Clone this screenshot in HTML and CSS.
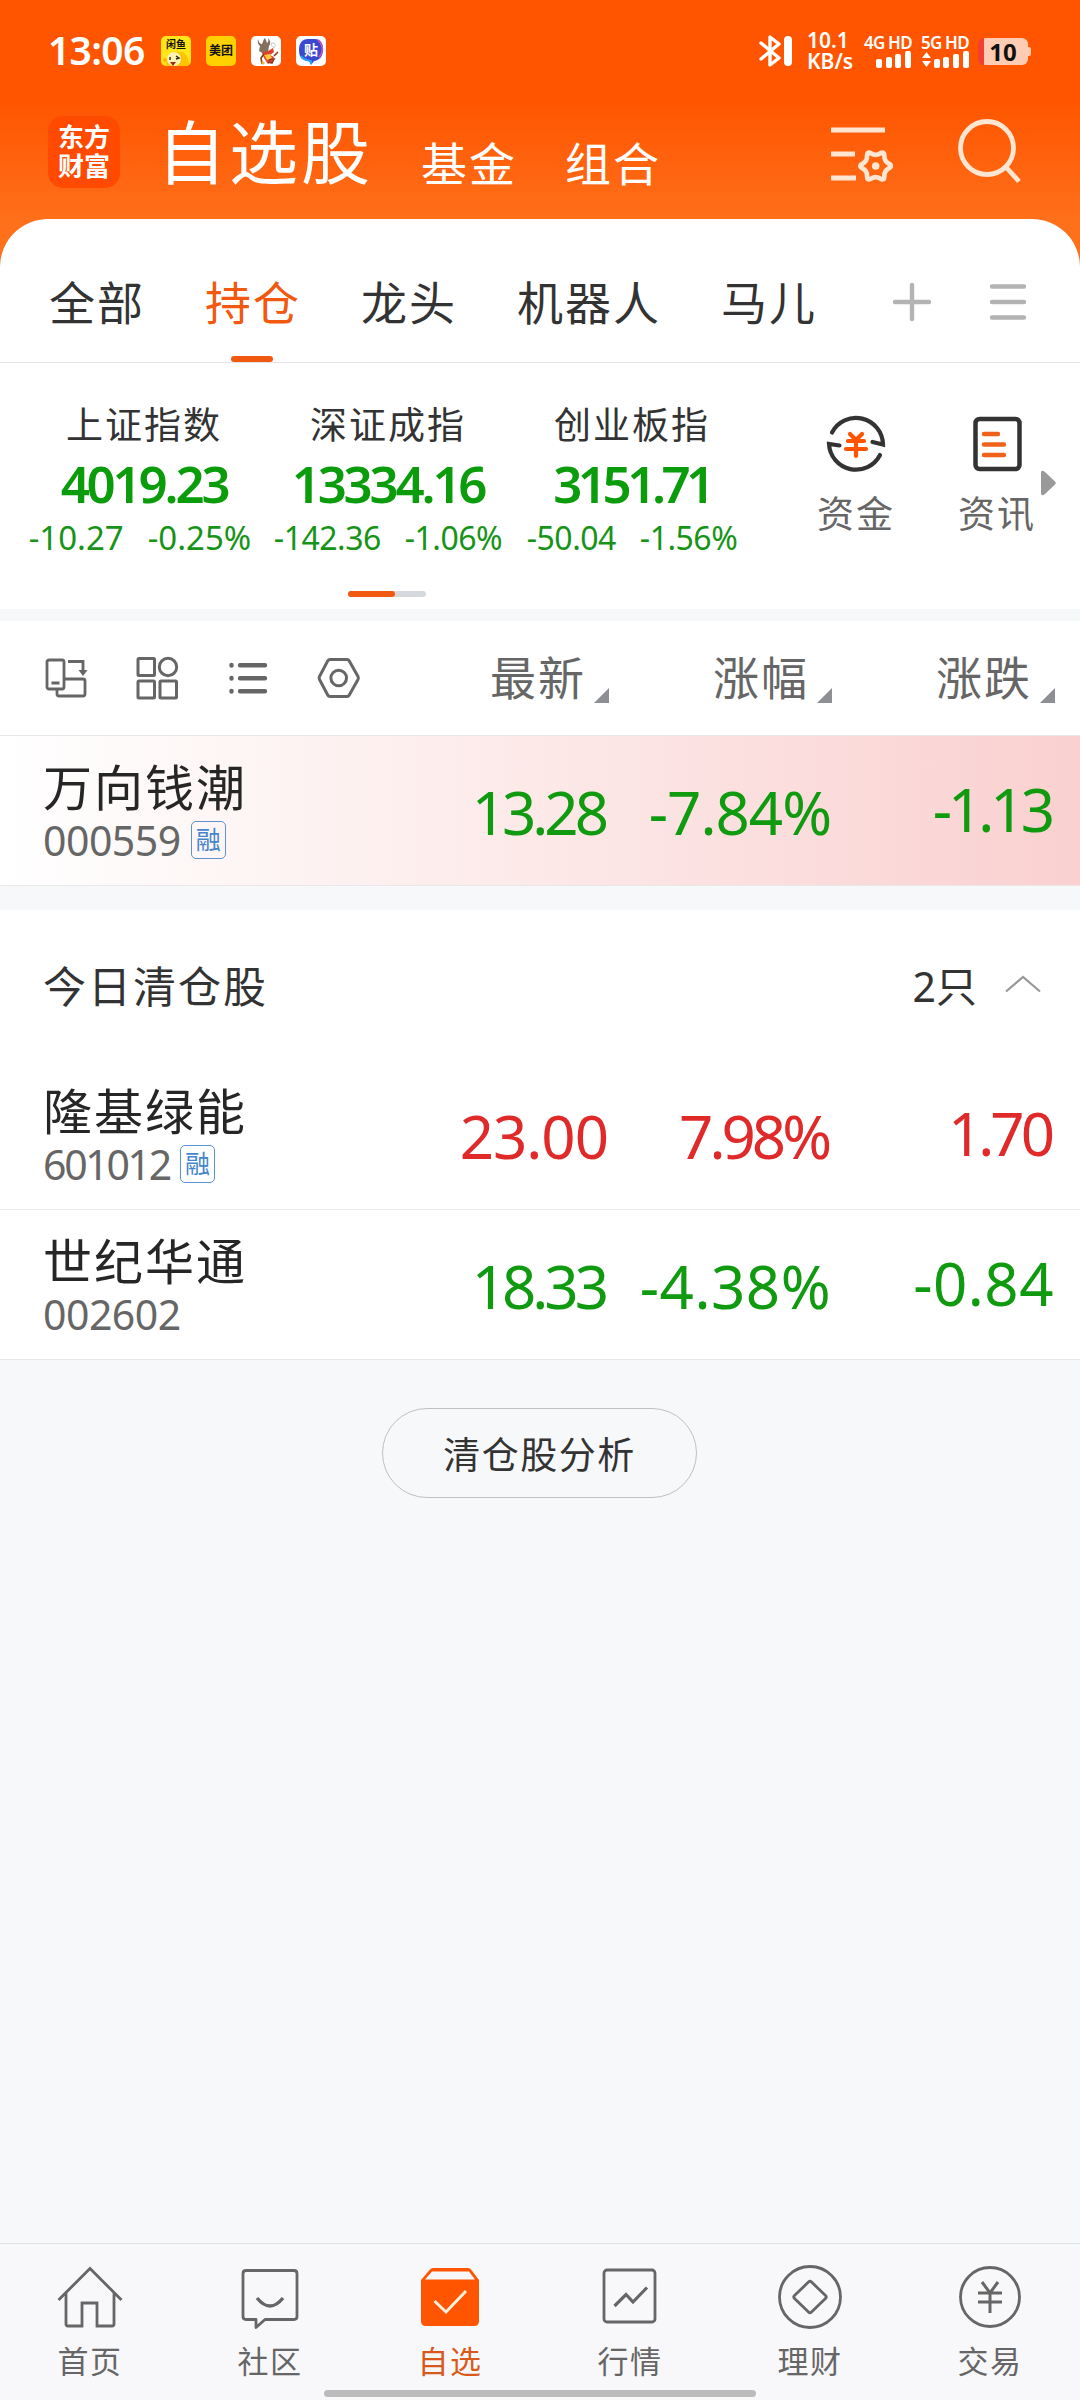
FILE: index.html
```
<!DOCTYPE html>
<html lang="zh-CN">
<head>
    <meta charset="UTF-8">
    <title>自选股 - 东方财富</title>
    <link rel="stylesheet" href="styles.css">
</head>
<body>

<header class="top">
    <div class="status">
        <span class="time">13:06</span>
        <div class="apps">
            <div class="app xianyu">
                <span>闲鱼</span>
                <svg width="30" height="15" viewBox="0 0 30 15"><path d="M5 15C5 5 11 0 18 1c7-1 10 6 10 14z" fill="#ffc400"/><circle cx="13" cy="8" r="7" fill="#fff3b0"/><path d="M9 6v3M15 5l3 2-3 1" stroke="#222" stroke-width="1.400" fill="none"/><path d="M9 11h6l-3 4z" fill="#a3281c"/><circle cx="4" cy="9" r="2" fill="#ffb400"/></svg>
            </div>
            <div class="app meituan"><span>美团</span></div>
            <div class="app">
                <svg width="30" height="30" viewBox="0 0 30 30"><path d="M7 3q1 5 4 5l2-5q1-2 2 1l1 3q2-1 1-5 4 4 1 8l-1 6-4 2-5-3 1-5Q6 8 7 3z" fill="#84705f"/><path d="M11 17l6-2 5-3 1 4-4 3 4 2-2 5-4 2-4-6z" fill="#e2402c"/><path d="M13 19l6-1 2 4-5 2z" fill="#ffc93c"/><path d="M13 18l-3 4 1 6M18 24l5-1-2 4-4-1M23 20l4-4" fill="none" stroke="#8c3d1c" stroke-width="1.600"/><circle cx="12" cy="27" r="1.600" fill="#f5b730"/><path d="M20 9q0-3 3-2 3 2 0 5z" fill="#fff" stroke="#bbb" stroke-width=".8"/></svg>
            </div>
            <div class="app tieba">
                <svg width="30" height="30" viewBox="0 0 30 30"><path d="M12 3h7c5 0 8 4 8 10s-2 11-9 12l-3 4-2-4C6 25 3 21 3 14S6 3 12 3z" fill="#3a49d0"/><path d="M22 4c5 4 6 12 1 17" fill="none" stroke="#c84fc0" stroke-width="1.800"/><path d="M5 20c2 4 6 4 10 5v3" fill="none" stroke="#27a5f5" stroke-width="1.800"/></svg>
                <span>贴</span>
            </div>
        </div>
        <div class="signals">
            <svg class="bt" width="34" height="32" viewBox="0 0 34 32"><path d="M2 8l18 15-9 7V2l9 7L2 24" fill="none" stroke="#fff" stroke-width="3.400" stroke-linejoin="round" stroke-linecap="round"/><rect x="25" y="1" width="8" height="30" rx="4" fill="#fff"/></svg>
            <div class="speed"><b>10.1</b><b>KB/s</b></div>
            <div class="sim">
                <b>4G HD</b>
                <svg width="48" height="17" viewBox="0 0 48 17" fill="#fff"><rect x="12" y="8" width="6" height="9" rx="2"/><rect x="22" y="6" width="6" height="11" rx="2"/><rect x="31" y="3" width="6" height="14" rx="2"/><rect x="41" y="0" width="6" height="17" rx="2"/></svg>
            </div>
            <div class="sim">
                <b>5G HD</b>
                <svg width="48" height="17" viewBox="0 0 48 17" fill="#fff"><path d="M1 7l4.500-6 4.500 6zM1 10l4.500 6 4.500-6z"/><rect x="13" y="8" width="6" height="9" rx="2"/><rect x="22" y="6" width="6" height="11" rx="2"/><rect x="32" y="3" width="6" height="14" rx="2"/><rect x="42" y="0" width="6" height="17" rx="2"/></svg>
            </div>
            <div class="battery"><b>10</b></div>
        </div>
    </div>
    <div class="title-bar">
        <div class="logo"><span>东方</span><span>财富</span></div>
        <h1>自选股</h1>
        <a class="sub">基金</a>
        <a class="sub">组合</a>
        <svg class="manage" width="64" height="64" viewBox="0 0 64 64" fill="none" stroke="#ffe6d2" stroke-width="5">
            <path d="M2 10h54M2 34h24M2 58h25"/>
            <path transform="translate(46.700 46) scale(.93)" d="M14-2.600Q19 0 14 2.600 9.100 5.250 9.300 10.900 9.500 16.500 4.750 13.500 0 10.500-4.750 13.500-9.500 16.500-9.300 10.900-9.100 5.250-14 2.600-19 0-14-2.600-9.100-5.250-9.300-10.900-9.500-16.500-4.750-13.500 0-10.500 4.750-13.500 9.500-16.500 9.300-10.900 9.100-5.250 14-2.600z"/>
            <circle cx="46.700" cy="46" r="3.800" fill="#ffe6d2" stroke="none"/>
        </svg>
        <svg class="search" width="66" height="66" viewBox="0 0 66 66" fill="none" stroke="#ffe6d2" stroke-width="4.800"><circle cx="30" cy="29" r="26.500"/><path d="M48 47l14 15.500"/></svg>
    </div>
</header>

<main>
    <section class="panel">
        <nav class="tabs">
            <a>全部</a>
            <a class="active">持仓</a>
            <a>龙头</a>
            <a>机器人</a>
            <a>马儿</a>
            <svg class="add" width="40" height="40" viewBox="0 0 40 40" stroke="#b3b3b3" stroke-width="4.400" stroke-linecap="round"><path d="M3 20h34M20 3v34"/></svg>
            <svg class="more" width="40" height="40" viewBox="0 0 40 40" stroke="#b3b3b3" stroke-width="4.400" stroke-linecap="round"><path d="M4 4.500h32M4 20h32M4 35.500h32"/></svg>
        </nav>
        <div class="market">
            <div class="index">
                <h3>上证指数</h3>
                <strong>4019.23</strong>
                <p><span>-10.27</span><span>-0.25%</span></p>
            </div>
            <div class="index small">
                <h3>深证成指</h3>
                <strong>13334.16</strong>
                <p><span>-142.36</span><span>-1.06%</span></p>
            </div>
            <div class="index small">
                <h3>创业板指</h3>
                <strong class="tight">3151.71</strong>
                <p><span>-50.04</span><span>-1.56%</span></p>
            </div>
            <div class="links">
                <a>
                    <svg width="60" height="60" viewBox="0 0 60 60" fill="none" stroke-linecap="round" stroke-width="4.200">
                        <path d="M6 18.500A27 27 0 0 1 57 30.500l-10.500-2.500M54 41A27 27 0 0 1 3 30l10.500 1.500" stroke="#333"/>
                        <path d="M24 20l6 6 6-6M22 27h16M20 35h20M30 27v15" stroke="#ff5500"/>
                    </svg>
                    资金
                </a>
                <a>
                    <svg width="60" height="60" viewBox="0 0 60 60" fill="none" stroke-linecap="round">
                        <rect x="8.500" y="5" width="44" height="50" rx="4" stroke="#333" stroke-width="4.500"/>
                        <path d="M17 20h14M17 30.500h20M17 41h20" stroke="#f0611a" stroke-width="4.400"/>
                    </svg>
                    资讯
                </a>
            </div>
            <svg class="next" width="16" height="26" viewBox="0 0 16 26"><path d="M1 3q0-4 4-1l10 9.500q1.500 1.500 0 3L5 24q-4 3-4-1z" fill="#999"/></svg>
        </div>
        <div class="pager"><i></i></div>
    </section>

    <section class="card holdings">
        <div class="head">
            <div class="tools">
                <svg width="44" height="44" viewBox="0 0 44 44" fill="none" stroke="#666" stroke-width="2.800"><rect x="3" y="4" width="17" height="29" rx="2"/><path d="M7.500 27h8M20.500 23H39q2 0 2 2v13q0 2-2 2H15q-2 0-2-2v-5M24 5.500h15V16"/><path d="M34.500 14h9l-4.500 6z" fill="#666" stroke="none"/></svg>
                <svg width="44" height="44" viewBox="0 0 44 44" fill="none" stroke="#666" stroke-width="3"><rect x="3" y="2.500" width="16.500" height="17" rx="1"/><circle cx="33" cy="11" r="8.700"/><rect x="3" y="25" width="16.500" height="17" rx="1"/><rect x="25" y="25" width="16.500" height="17" rx="1"/></svg>
                <svg width="44" height="44" viewBox="0 0 44 44" fill="none" stroke="#666" stroke-width="4.400" stroke-linecap="round"><path d="M5.500 9v.6M5.500 22v.6M5.500 35v.6M14 9.300h25M14 22.300h25M14 35.300h25"/></svg>
                <svg width="44" height="44" viewBox="0 0 44 44" fill="none" stroke="#666" stroke-width="3"><path d="M13 3.500h17q1.500 0 2.300 1.400L41 20.500q.8 1.500 0 3L32.300 39q-.8 1.500-2.300 1.500H13q-1.500 0-2.300-1.500L2.500 23.500q-.8-1.500 0-3L10.700 4.900Q11.500 3.500 13 3.500z"/><circle cx="21.700" cy="22" r="7.800"/></svg>
            </div>
            <span class="col">最新</span>
            <span class="col">涨幅</span>
            <span class="col">涨跌</span>
        </div>
        <div class="row flash down">
            <div class="stock">
                <h2>万向钱潮</h2>
                <p><span class="code">000559</span><span class="tag">融</span></p>
            </div>
            <span class="num tight">13.28</span>
            <span class="num">-7.84%</span>
            <span class="num diff tight">-1.13</span>
        </div>
    </section>

    <section class="card cleared">
        <div class="section-title">
            <h3>今日清仓股</h3>
            <span>2只</span>
            <svg width="36" height="18" viewBox="0 0 36 18" fill="none" stroke="#999" stroke-width="2.200"><path d="M1 16.500L18 2l17 14.500"/></svg>
        </div>
        <div class="row up">
            <div class="stock">
                <h2>隆基绿能</h2>
                <p><span class="code tight">601012</span><span class="tag">融</span></p>
            </div>
            <span class="num">23.00</span>
            <span class="num tight">7.98%</span>
            <span class="num diff tight">1.70</span>
        </div>
        <div class="row down">
            <div class="stock">
                <h2>世纪华通</h2>
                <p><span class="code">002602</span></p>
            </div>
            <span class="num tight">18.33</span>
            <span class="num loose">-4.38%</span>
            <span class="num diff loose">-0.84</span>
        </div>
    </section>

    <button class="analyse">清仓股分析</button>
</main>

<footer>
    <nav class="bottom">
        <a>
            <svg width="66" height="66" viewBox="0 0 66 66" fill="none" stroke="#666" stroke-width="2.800"><path d="M1.500 36L33 4.500 64.500 36M9 29v31q0 2 2 2h14V39h15v23h15q2 0 2-2V29"/></svg>
            首页
        </a>
        <a>
            <svg width="66" height="66" viewBox="0 0 66 66" fill="none" stroke="#666" stroke-width="2.800"><path d="M9 6.500h48q3 0 3 3v43q0 3-3 3H28l-9 8v-8H9q-3 0-3-3v-43q0-3 3-3z" stroke-linejoin="round"/><path d="M20 34q13 16 26 0" stroke-width="3.400"/></svg>
            社区
        </a>
        <a class="active">
            <svg width="66" height="66" viewBox="0 0 66 66"><path d="M4 16L13 5.500q1-1.500 3-1.500h35q2 0 3 1.500L62 16v41q0 5-5 5H9q-5 0-5-5z" fill="#ff5500"/><path d="M15 7.500h37l6 8H8z" fill="#f8f8fa"/><path d="M17.500 37L29 48l20-21" fill="none" stroke="#ffefdc" stroke-width="3"/></svg>
            自选
        </a>
        <a>
            <svg width="66" height="66" viewBox="0 0 66 66" fill="none" stroke="#666" stroke-width="2.800"><rect x="7" y="6" width="51" height="52" rx="3"/><path d="M17.500 42L29 30.500l7 7.500 14-14.500" stroke-width="3.200"/></svg>
            行情
        </a>
        <a>
            <svg width="66" height="66" viewBox="0 0 66 66" fill="none" stroke="#666" stroke-width="2.800"><circle cx="33" cy="33" r="30.500"/><path d="M31.500 18q1.500-1.500 3 0l14 13.500q1.500 1.500 0 3L34.500 48q-1.500 1.500-3 0l-14-13.500q-1.500-1.500 0-3z"/></svg>
            理财
        </a>
        <a>
            <svg width="66" height="66" viewBox="0 0 66 66" fill="none" stroke="#666" stroke-width="2.800"><circle cx="33" cy="33" r="29.500"/><path d="M25 18l8 11 8-11M21 29h24M21 38h24M33 29v20" stroke-width="3"/></svg>
            交易
        </a>
    </nav>
    <div class="home-bar"></div>
</footer>

</body>
</html>
```

FILE: styles.css
```
* {
    box-sizing: border-box;
}
body {
    margin: 0;
    width: 1080px;
    height: 2400px;
    display: flex;
    flex-direction: column;
    background: #f7f8fa;
    color: #333;
    font-family: "Noto Sans", "Noto Sans CJK SC", sans-serif;
    overflow: hidden;
}
h1, h2, h3, p {
    margin: 0;
    font-weight: 400;
}
svg {
    display: block;
    flex: none;
}

/* header */
.top {
    height: 267px;
    margin-bottom: -48px;
    background: linear-gradient(#ff5500 100px, #ff701b 225px);
    color: #fff;
}
.status {
    height: 100px;
    padding: 2px 52px 0 48px;
    display: flex;
    align-items: center;
}
.time {
    font-size: 39px;
    font-weight: 600;
    width: 113px;
    letter-spacing: -0.7px;
    line-height: 50px;
    padding-bottom: 3px;
}
.apps {
    display: flex;
    gap: 15px;
}
.app {
    position: relative;
    width: 30px;
    height: 30px;
    border-radius: 5px;
    background: #fff;
    overflow: hidden;
    color: #111;
    text-align: center;
    font-weight: 700;
}
.xianyu {
    background: #ffe619;
    font-size: 10px;
    line-height: 17px;
}
.xianyu span {
    display: block;
    height: 15px;
}
.meituan {
    background: #ffd100;
    font-size: 12px;
    line-height: 29px;
}
.tieba span {
    position: absolute;
    inset: 0;
    color: #fff;
    font-size: 14px;
    line-height: 27px;
}
.signals {
    margin-left: auto;
    display: flex;
    align-items: center;
}
.bt {
    margin-right: 14px;
}
.speed {
    width: 57px;
    display: flex;
    flex-direction: column;
    font-size: 21px;
    line-height: 21px;
}
.speed b, .sim b {
    font-weight: 600;
}
.sim {
    width: 48px;
    margin-right: 9px;
}
.sim b {
    display: block;
    font-size: 17px;
    line-height: 17px;
    letter-spacing: -0.8px;
    white-space: nowrap;
}
.battery {
    position: relative;
    width: 50px;
    height: 27px;
    border-radius: 6px;
    background: linear-gradient(90deg, #f04030 6px, #ffcbb2 6px);
    color: #111;
    text-align: center;
    font-size: 24px;
    line-height: 27px;
}
.battery::after {
    content: "";
    position: absolute;
    right: -3px;
    top: 9px;
    width: 3px;
    height: 9px;
    border-radius: 0 2px 2px 0;
    background: #ffcbb2;
}
.title-bar {
    height: 103px;
    padding: 0 57px 0 48px;
    display: flex;
    align-items: center;
}
.logo {
    width: 72px;
    height: 72px;
    border-radius: 15px;
    background: #ff4a00;
    padding-top: 7px;
    display: flex;
    flex-direction: column;
    align-items: center;
    font-size: 26px;
    font-weight: 700;
    line-height: 29px;
}
h1 {
    margin-left: 37px;
    width: 264px;
    font-size: 69px;
    letter-spacing: 3px;
    line-height: 100px;
}
.sub {
    font-size: 46px;
    letter-spacing: 2px;
    margin-right: 48px;
    padding-top: 19px;
}
.manage {
    margin-left: auto;
    margin-right: 64px;
}

/* group tabs */
.panel {
    height: 390px;
    background: #fff;
    border-radius: 48px 48px 0 0;
}
.tabs {
    height: 144px;
    padding: 24px 52px 0 49px;
    display: flex;
    border-bottom: 1px solid #e4e4e6;
    font-size: 46px;
    line-height: 119px;
}
.tabs a {
    position: relative;
    letter-spacing: 2px;
    margin-right: 60px;
}
.tabs .active {
    color: #f0590f;
}
.tabs .active::after {
    content: "";
    position: absolute;
    left: 26px;
    bottom: 0;
    width: 42px;
    height: 6px;
    border-radius: 3px;
    background: #f0590f;
}
.add, .more {
    margin-top: 39px;
}
.add {
    margin-left: auto;
}
.more {
    margin-left: 56px;
}

/* indices */
.market {
    height: 226px;
    padding: 39px 24px 0 22px;
    display: flex;
}
.index {
    width: 244px;
    display: flex;
    flex-direction: column;
    align-items: center;
    white-space: nowrap;
}
.index h3 {
    font-size: 37px;
    letter-spacing: 2px;
    line-height: 46px;
}
.index strong {
    font-size: 51px;
    font-weight: 600;
    line-height: 70px;
    letter-spacing: -3.200px;
    color: #0b9c0b;
}
.index strong.tight {
    letter-spacing: -4.500px;
}
.index p {
    display: flex;
    gap: 24px;
    margin-left: -8px;
    font-size: 33px;
    line-height: 40px;
    letter-spacing: 0;
    color: #179417;
}
.index.small p {
    margin-left: 0;
    font-size: 32px;
    letter-spacing: -0.5px;
}
.links {
    margin-left: 64px;
    display: flex;
    gap: 65px;
    color: #666;
    font-size: 37px;
    letter-spacing: 2px;
    line-height: 52px;
}
.links a {
    padding-top: 12px;
    width: 76px;
    display: flex;
    flex-direction: column;
    align-items: center;
    gap: 14px;
    white-space: nowrap;
}
.next {
    margin: 68px 0 0 auto;
}
.pager {
    width: 78px;
    height: 6px;
    margin: 2px auto 0 348px;
    border-radius: 3px;
    background: #d5d8dd;
}
.pager i {
    display: block;
    width: 47px;
    height: 6px;
    border-radius: 3px;
    background: #f0590f;
}

/* stock list */
.card {
    background: #fff;
}
.holdings {
    margin-top: 12px;
}
.cleared {
    margin-top: 24px;
}
.head {
    height: 115px;
    padding: 0 25px 0 44px;
    display: flex;
    align-items: center;
    border-bottom: 1px solid #e8e8ea;
}
.tools {
    flex: 1;
    display: flex;
    gap: 47px;
}
.col {
    position: relative;
    width: 223px;
    padding: 0 23px 6px 0;
    text-align: right;
    font-size: 46px;
    letter-spacing: 2px;
    color: #666;
}
.col::after {
    content: "";
    position: absolute;
    right: 0;
    bottom: 11px;
    border-left: 15px solid transparent;
    border-bottom: 15px solid #8e8e95;
}
.row {
    height: 150px;
    padding: 0 26px 0 43px;
    display: flex;
    border-bottom: 1px solid #e8e8ea;
}
.flash {
    background: linear-gradient(90deg, #fff, #fce9e8 50%, #fad0d0);
}
.stock {
    flex: 1;
    padding-top: 21px;
}
.stock h2 {
    font-size: 49px;
    letter-spacing: 2px;
    line-height: 60px;
    color: #262626;
}
.stock p {
    display: flex;
    align-items: center;
    font-size: 41px;
    line-height: 46px;
    color: #666;
}
.code {
    letter-spacing: -0.5px;
}
.code.tight {
    letter-spacing: -2.300px;
}
.tag {
    width: 35px;
    height: 38px;
    margin-left: 10px;
    border: 1.5px solid #5a93d2;
    border-radius: 5px;
    color: #4585cc;
    font-size: 25px;
    line-height: 34px;
    text-align: center;
}
.num {
    width: 223px;
    text-align: right;
    font-size: 60px;
    line-height: 153px;
    letter-spacing: -1px;
    white-space: nowrap;
}
.num.tight {
    letter-spacing: -4px;
    padding-right: 3px;
}
.num.loose {
    width: 225px;
    margin-left: -2px;
    letter-spacing: 0.5px;
}
.diff {
    line-height: 147px;
}
.up .num {
    color: #e02a2a;
}
.down .num {
    color: #0f9a0f;
}
.section-title {
    height: 150px;
    padding: 0 39px 2px 43px;
    display: flex;
    align-items: center;
}
.section-title h3 {
    flex: 1;
    font-size: 43px;
    letter-spacing: 2px;
}
.section-title span {
    font-size: 41px;
    margin-right: 28px;
}
.analyse {
    display: block;
    width: 315px;
    height: 90px;
    margin: 48px auto 0 382px;
    border: 1px solid #bfc0c3;
    border-radius: 45px;
    background: none;
    color: #333;
    font-family: inherit;
    font-size: 37px;
    letter-spacing: 1.5px;
}

/* bottom bar */
footer {
    margin-top: auto;
    height: 157px;
    background: #f8f8fa;
    border-top: 1px solid #e2e3e5;
}
.bottom {
    display: flex;
    height: 146px;
}
.bottom a {
    flex: 1;
    padding-top: 20px;
    display: flex;
    flex-direction: column;
    align-items: center;
    gap: 10px;
    font-size: 31px;
    letter-spacing: 1.5px;
    line-height: 42px;
    color: #666;
}
.bottom .active {
    color: #d9591c;
}
.home-bar {
    width: 432px;
    height: 7px;
    margin: 0 auto;
    border-radius: 4px;
    background: #bbb;
}
```
